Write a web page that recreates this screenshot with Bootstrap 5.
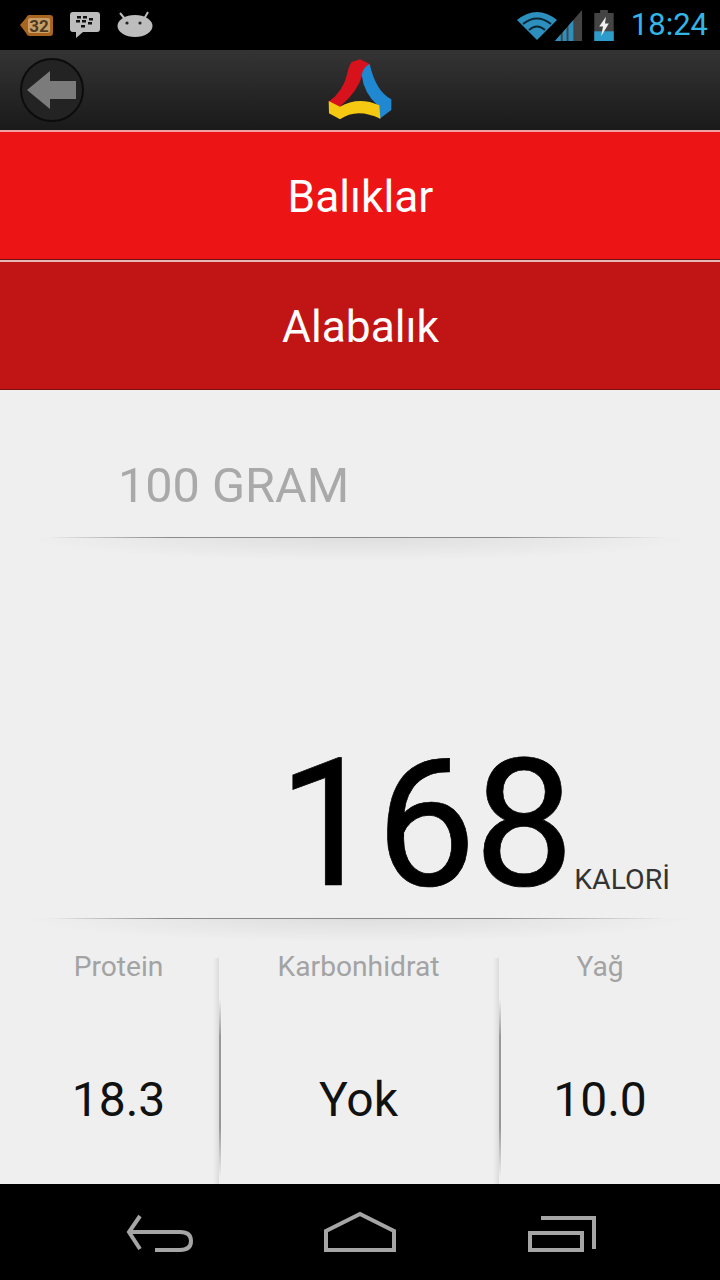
<!DOCTYPE html>
<html lang="en">
<head>
    <meta charset="UTF-8">
    <meta name="viewport" content="width=device-width, initial-scale=1.0">
    <title>Alabalık</title>
    <link href="https://cdn.jsdelivr.net/npm/bootstrap@5.3.0/dist/css/bootstrap.min.css" rel="stylesheet">
    <style>
        body {
            background: #000;
            font-family: Roboto, "Liberation Sans", sans-serif;
        }
        .phone {
            width: 720px;
            height: 1280px;
            overflow: hidden;
        }
        .status-bar {
            height: 50px;
            background: #000;
            padding: 0 12px 0 19px;
        }
        .status-left { gap: 17px; }
        .signal-icon {
            margin-left: -3px;
            margin-right: 11px;
        }
        .status-clock {
            color: #33b5e5;
            font-size: 31px;
            line-height: 50px;
            margin-left: 17px;
        }
        .action-bar {
            height: 80px;
            background: linear-gradient(#343434, #1a1a1a);
            padding-left: 20px;
        }
        .back-btn {
            width: 64px;
            height: 64px;
            margin-top: 8px;
            border-radius: 50%;
            border: 2px solid #0c0c0c;
            background: #232323;
        }
        .app-logo {
            left: 300px;
            top: 0;
        }
        .title-main, .title-sub {
            color: #fff;
            font-size: 44.3px;
            padding-top: 4px;
            padding-left: 1px;
        }
        .title-main {
            height: 130px;
            border-top: 2px solid #f0a0a0;
            border-bottom: 1px solid #6e1010;
            background: #ec1414;
        }
        .title-sub {
            height: 130px;
            border-top: 2px solid #e8b8b8;
            border-bottom: 1px solid #7d1010;
            background: #c11414;
        }
        .content {
            height: 794px;
            background: #efefef;
        }
        .gram-row {
            height: 147px;
            padding-left: 118px;
            padding-top: 64px;
            color: #a9a9a9;
            font-size: 48.600px;
            line-height: 64px;
        }
        .fade-rule {
            height: 24px;
            margin: 0 20px;
            background:
                linear-gradient(90deg, transparent 4%, #8a8a8a 22%, #8a8a8a 70%, transparent 95%) top / 100% 1px no-repeat,
                radial-gradient(ellipse 50% 100% at 50% 0, #dedede, transparent) top / 100% 100% no-repeat;
        }
        .calorie-row {
            height: 357px;
            padding-right: 50px;
        }
        .calorie-value {
            color: #000;
            font-size: 178px;
            letter-spacing: -2px;
            line-height: 190px;
            margin-bottom: -1px;
            -webkit-text-stroke: 0.7px #000;
        }
        .calorie-unit {
            color: #333;
            font-size: 28.500px;
            line-height: 32px;
            margin-left: 2px;
            margin-bottom: 22px;
        }
        .macro-row {
            height: 266px;
            margin-top: -24px;
        }
        .macro-col {
            padding-top: 33px;
            text-align: center;
        }
        .macro-col-a { width: 237px; }
        .macro-col-b { width: 243px; }
        .macro-col-c { width: 240px; }
        .macro-divider {
            top: 40px;
            bottom: 0;
            width: 8px;
            background:
                linear-gradient(transparent 18%, #999 35%, #999 75%, transparent 97%) right / 2px 100% no-repeat,
                linear-gradient(90deg, transparent, rgba(0, 0, 0, .08)) left / 6px 100% no-repeat;
        }
        .macro-divider-a { left: 213px; }
        .macro-divider-b { left: 493px; }
        .macro-label {
            color: #a3a3a3;
            font-size: 28.200px;
            line-height: 32px;
        }
        .macro-value {
            color: #111;
            font-size: 48px;
            line-height: 56px;
            margin-top: 89px;
        }
        .nav-bar {
            height: 96px;
            background: #000;
        }
    </style>
</head>
<body>
    <div class="phone d-flex flex-column">
        <div class="status-bar d-flex align-items-center justify-content-between">
            <div class="status-left d-flex align-items-center">
                <svg width="34" height="26" viewBox="0 0 34 26">
                    <path d="M1 13 L7 6 Q8 3 10 3 H31 Q34 3 34 6 V21 Q34 24 31 24 H10 Q8 24 7 21Z" fill="#a9641f"/>
                    <rect x="9" y="6" width="22" height="15" rx="2" fill="#c9a06a"/>
                    <text x="20" y="20" text-anchor="middle" font-family="Roboto" font-weight="700" font-size="17" fill="#4d3a20">32</text>
                </svg>
                <svg width="30" height="28" viewBox="0 0 30 28">
                    <path d="M3 1 H27 Q30 1 30 4 V18 Q30 21 27 21 H13 L6 27 V21 H3 Q0 21 0 18 V4 Q0 1 3 1Z" fill="#bdbdbd"/>
                    <g fill="#111">
                        <rect x="7" y="5" width="4" height="2.5"/><rect x="13" y="5" width="4" height="2.5"/>
                        <rect x="6" y="9" width="4" height="2.5"/><rect x="12" y="9" width="4" height="2.5"/><rect x="19" y="7" width="4" height="2.5"/>
                        <rect x="18" y="11" width="4" height="2.5"/><rect x="11" y="14" width="4" height="2.500"/>
                    </g>
                </svg>
                <svg width="36" height="28" viewBox="0 0 36 28">
                    <path d="M3 2 L8 8 M31 1 L27 8" stroke="#bdbdbd" stroke-width="2"/>
                    <ellipse cx="18" cy="15" rx="17.5" ry="11" fill="#bdbdbd"/>
                    <circle cx="10" cy="12" r="1.6" fill="#222"/><circle cx="23" cy="12" r="1.6" fill="#222"/>
                </svg>
            </div>
            <div class="d-flex align-items-center">
                <svg width="40" height="30" viewBox="0 0 40 30">
                    <path d="M0 10 Q20 -6 40 10 L20 30Z" fill="#2d8fbd"/>
                    <path d="M6 14 Q20 3 34 14" stroke="#0c2530" stroke-width="2" fill="none"/>
                    <path d="M12 20 Q20 13 28 20" stroke="#0c2530" stroke-width="2" fill="none"/>
                </svg>
                <svg class="signal-icon" width="29" height="31" viewBox="0 0 28 32">
                    <path d="M0 32 L28 0 V32Z" fill="#444"/>
                    <path d="M0 32 L6 25 V32Z M8 32 V23 L12 18.500 V32Z M14 32 V16 L19 10.500 V32Z" fill="#2d8fbd"/>
                </svg>
                <svg width="20" height="31" viewBox="0 0 20 32">
                    <path d="M6 0 H14 V3 H20 V32 H0 V3 H6Z" fill="#444"/>
                    <rect x="0" y="22" width="20" height="10" fill="#2d9ccb"/>
                    <path d="M12 7 L5 17 H9 L7 27 L15 14 H11Z" fill="#f0f0f0"/>
                </svg>
                <span class="status-clock">18:24</span>
            </div>
        </div>

        <div class="action-bar position-relative">
            <div class="back-btn d-flex align-items-center justify-content-center">
                <svg width="50" height="38" viewBox="0 0 50 38">
                    <path d="M0 19 L23 0 V10 H49 V28 H23 V38Z" fill="#7b7b7b"/>
                </svg>
            </div>
            <svg class="app-logo position-absolute" width="120" height="80" viewBox="0 0 360 240">
                <path d="M155 36 L180 28 L209 42 Q192 50 187 75 Q172 125 125 165 L120 172 L86 155 Q130 125 142 70 Q146 48 155 36Z" fill="#d8121c"/>
                <path d="M209 42 Q190 50 185 75 Q192 130 232 165 L238 207 L274 180 L274 148 Q228 125 209 42Z" fill="#1f88d0"/>
                <path d="M86 153 L120 170 Q175 138 238 166 L241 206 Q170 172 120 208 L87 190Z" fill="#f5c812"/>
            </svg>
        </div>

        <div class="title-main d-flex align-items-center justify-content-center">Balıklar</div>
        <div class="title-sub d-flex align-items-center justify-content-center">Alabalık</div>

        <div class="content">
            <div class="gram-row">100 GRAM</div>
            <div class="fade-rule"></div>
            <div class="calorie-row d-flex align-items-end justify-content-end">
                <div class="calorie-value">168</div>
                <div class="calorie-unit">KALORİ</div>
            </div>
            <div class="fade-rule"></div>
            <div class="macro-row d-flex position-relative">
                <div class="macro-col macro-col-a">
                    <div class="macro-label">Protein</div>
                    <div class="macro-value">18.3</div>
                </div>
                <div class="macro-col macro-col-b">
                    <div class="macro-label">Karbonhidrat</div>
                    <div class="macro-value">Yok</div>
                </div>
                <div class="macro-col macro-col-c">
                    <div class="macro-label">Yağ</div>
                    <div class="macro-value">10.0</div>
                </div>
                <div class="macro-divider macro-divider-a position-absolute"></div>
                <div class="macro-divider macro-divider-b position-absolute"></div>
            </div>
        </div>

        <div class="nav-bar position-relative">
            <svg width="720" height="96" viewBox="0 0 720 96">
                <g fill="none" stroke="#a5a5a5" stroke-width="4">
                    <path d="M140 32 L129 48 L140 65"/>
                    <path d="M130 48 H180 Q191 48 191 57 Q191 66 180 66 H155"/>
                    <path d="M326 66 V47 L360 30 L394 47 V66Z"/>
                    <path d="M530 49 H582 V66 H530Z"/>
                    <path d="M541 34 H594 V65"/>
                </g>
            </svg>
        </div>
    </div>
    <script src="https://cdn.jsdelivr.net/npm/bootstrap@5.3.0/dist/js/bootstrap.bundle.min.js"></script>
</body>
</html>
